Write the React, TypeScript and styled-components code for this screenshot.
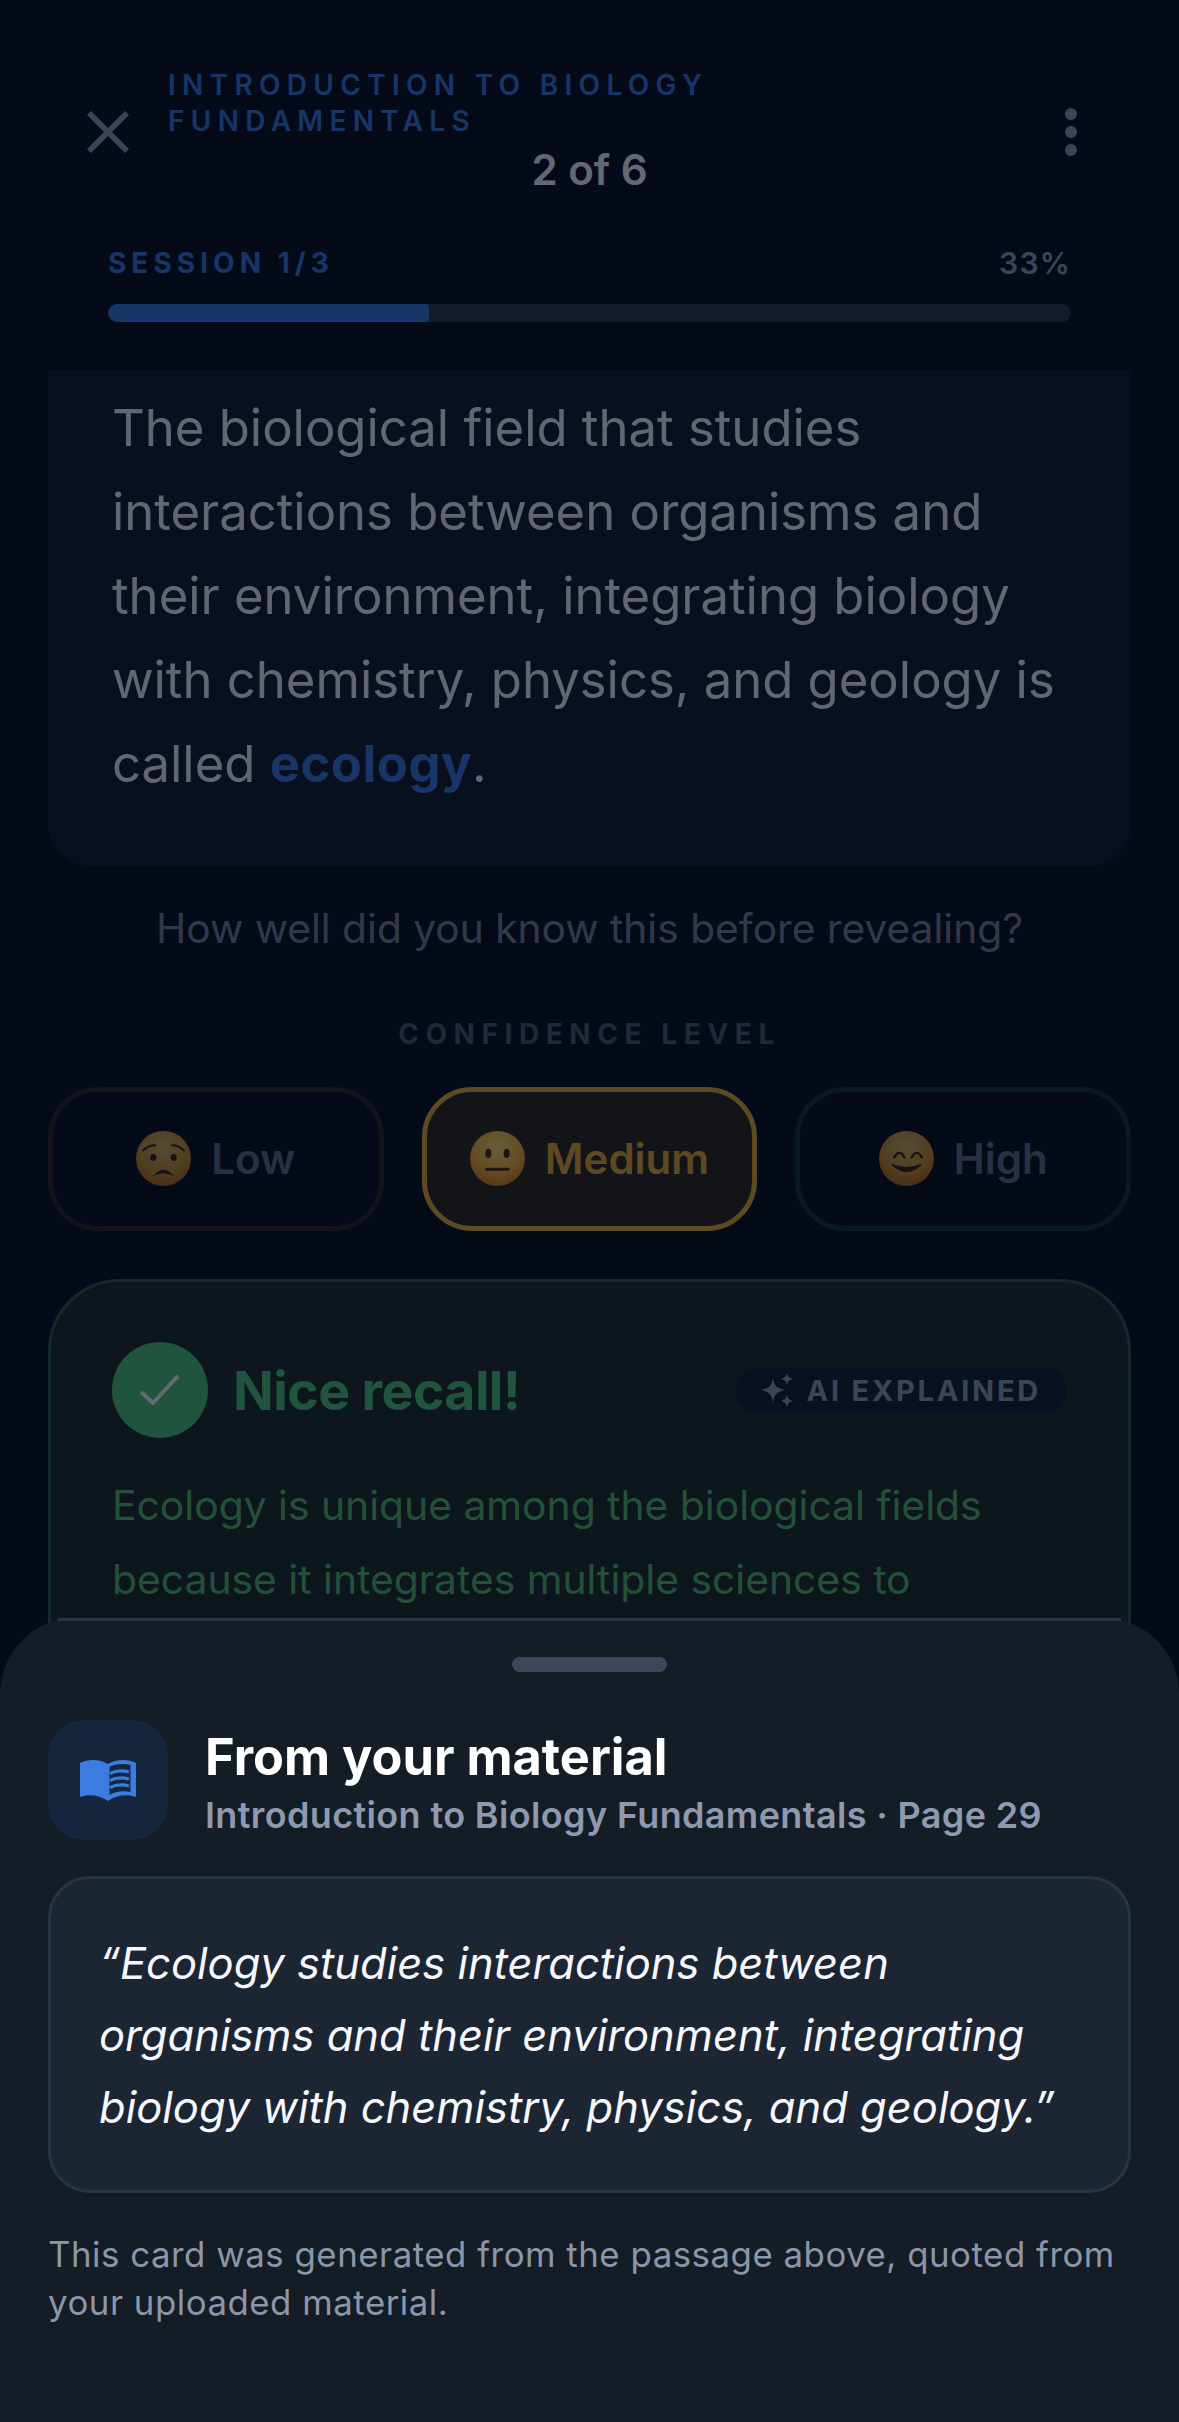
import styled, { createGlobalStyle } from "styled-components";

const Global = createGlobalStyle`
  html, body { margin: 0; padding: 0; background: #060a18; }
  * { box-sizing: border-box; }
`;

const Screen = styled.div`
  position: relative;
  width: 1179px;
  height: 2422px;
  overflow: hidden;
  background: #0c1019;
  font-family: Inter, "Noto Sans", sans-serif;
`;

const Header = styled.header`
  display: flex;
  align-items: center;
  justify-content: space-between;
  height: 197px;
  padding: 67px 87px 0;
`;

const IconBox = styled.div`
  flex: none;
  width: 42px;
  height: 48px;
  display: flex;
  align-items: center;
  justify-content: center;
`;

const HeaderMiddle = styled.div`
  flex: 1;
  min-width: 0;
  padding: 0 39px;
  align-self: flex-start;
`;

const DeckTitle = styled.div`
  font-size: 28px;
  line-height: 36px;
  font-weight: 600;
  letter-spacing: 0.225em;
  color: #3b7ae0;
  text-transform: uppercase;
`;

const Counter = styled.div`
  margin-top: 7px;
  font-size: 42px;
  line-height: 48px;
  font-weight: 600;
  text-align: center;
  color: #f8fafc;
`;

const Progress = styled.section`
  padding: 48px 108px 0;
`;

const ProgressRow = styled.div`
  display: flex;
  justify-content: space-between;
  align-items: center;
  height: 36px;
`;

const SessionLabel = styled.span`
  font-size: 28px;
  font-weight: 700;
  letter-spacing: 0.18em;
  color: #3b7ae0;
`;

const Percent = styled.span`
  font-size: 30px;
  font-weight: 600;
  letter-spacing: 0.04em;
  color: #94a3b8;
`;

const Track = styled.div`
  margin-top: 23px;
  height: 18px;
  border-radius: 9px;
  background: #2e3848;
  overflow: hidden;
`;

const Fill = styled.div`
  height: 100%;
  border-radius: 9px 3px 3px 9px;
  background: #3b7ae0;
`;

const Body = styled.main`
  margin-top: 48px;
  padding: 0 48px;
`;

const FactCard = styled.div`
  padding: 16px 64px 60px;
  border-radius: 0 0 42px 42px;
  background: #161c2a;
  font-size: 50.8px;
  line-height: 84px;
  color: #f1f5f9;
`;

const Term = styled.strong`
  font-weight: 700;
  letter-spacing: 0.01em;
  color: #3b7ae0;
`;

const Hint = styled.p`
  margin: 36px 0 0;
  font-size: 40.7px;
  line-height: 54px;
  text-align: center;
  color: #7c8296;
`;

const ConfidenceLabel = styled.div`
  margin-top: 60px;
  font-size: 28px;
  line-height: 36px;
  font-weight: 700;
  letter-spacing: 0.235em;
  text-align: center;
  color: #555b69;
`;

const ConfidenceRow = styled.div`
  display: grid;
  grid-template-columns: repeat(3, 1fr);
  gap: 38px;
  margin-top: 35px;
`;

const toneColors = {
  low: { border: "#342e20", bg: "transparent", text: "#7c87a6", opacity: 0.8 },
  medium: { border: "#e8b032", bg: "#2f2919", text: "#e8b032", opacity: 1 },
  high: { border: "#1c3c30", bg: "transparent", text: "#7c87a6", opacity: 0.8 },
};

type Tone = keyof typeof toneColors;

const ConfidenceButton = styled.div<{ $tone: Tone }>`
  display: flex;
  align-items: center;
  justify-content: center;
  gap: 20px;
  height: 144px;
  padding-bottom: 2px;
  border-radius: 50px;
  border: 5px solid ${(p) => toneColors[p.$tone].border};
  background: ${(p) => toneColors[p.$tone].bg};
  color: ${(p) => toneColors[p.$tone].text};
  opacity: ${(p) => toneColors[p.$tone].opacity};
  font-size: 42px;
  font-weight: 600;
`;

const ResultCard = styled.div`
  margin-top: 48px;
  padding: 60px 61px 0;
  height: 500px;
  border: 3px solid #345b46;
  border-radius: 72px;
  background: #1e2f26;
`;

const ResultHead = styled.div`
  display: flex;
  align-items: center;
  gap: 25px;
`;

const CheckCircle = styled.div`
  flex: none;
  width: 96px;
  height: 96px;
  border-radius: 50%;
  background: #50c878;
  display: flex;
  align-items: center;
  justify-content: center;
`;

const ResultTitle = styled.div`
  flex: 1;
  font-size: 53.5px;
  font-weight: 700;
  letter-spacing: -0.01em;
  color: #50c878;
`;

const AiBadge = styled.div`
  display: flex;
  align-items: center;
  gap: 12px;
  height: 47px;
  padding: 0 26px;
  border-radius: 24px;
  background: #16222e;
  color: #94a3b8;
  font-size: 29px;
  font-weight: 700;
  letter-spacing: 0.095em;
`;

const ResultText = styled.p`
  margin: 30px 0 0;
  font-size: 40.8px;
  line-height: 74px;
  color: #57bf6e;
`;

const Scrim = styled.div`
  position: absolute;
  inset: 0;
  background: rgba(2, 6, 23, 0.6);
`;

const Sheet = styled.aside`
  position: absolute;
  left: 0;
  right: 0;
  bottom: 0;
  height: 804px;
  padding: 39px 48px 0;
  border-radius: 76px 76px 0 0;
  background: #141c26;

  &::before {
    content: "";
    position: absolute;
    top: 0;
    left: 58px;
    right: 58px;
    height: 3px;
    background: #2a3648;
  }
`;

const Handle = styled.div`
  width: 155px;
  height: 15px;
  margin: 0 auto;
  border-radius: 8px;
  background: #3d4759;
`;

const SourceRow = styled.div`
  display: flex;
  align-items: center;
  gap: 37px;
  margin-top: 48px;
`;

const SourceTile = styled.div`
  flex: none;
  width: 120px;
  height: 120px;
  border-radius: 36px;
  background: #17263f;
  display: flex;
  align-items: center;
  justify-content: center;
`;

const SourceText = styled.div`
  padding-top: 4.5px;
`;

const SourceTitle = styled.div`
  font-size: 50.5px;
  line-height: 60px;
  font-weight: 700;
  color: #ffffff;
`;

const SourceMeta = styled.div`
  margin-top: 4.5px;
  font-size: 36px;
  line-height: 46px;
  font-weight: 600;
  letter-spacing: 0.01em;
  color: #8f9ab0;
`;

const QuoteBox = styled.blockquote`
  margin: 36px 0 0;
  height: 317px;
  padding: 48px 48px 0;
  border: 3px solid #283444;
  border-radius: 42px;
  background: #1c2633;
  font-size: 43.5px;
  line-height: 72px;
  font-style: italic;
  color: #f5f7fa;
`;

const Footnote = styled.p`
  margin: 37px 0 0;
  font-size: 34.8px;
  line-height: 48px;
  letter-spacing: 0.015em;
  color: #8d96a8;
`;

function FaceBase({ id }: { id: string }) {
  return (
    <>
      <defs>
        <radialGradient id={id} cx="50%" cy="30%" r="72%">
          <stop offset="0%" stopColor="#ffdf70" />
          <stop offset="65%" stopColor="#f8b030" />
          <stop offset="100%" stopColor="#dc7a1c" />
        </radialGradient>
      </defs>
      <circle cx="27" cy="27" r="27" fill={`url(#${id})`} />
    </>
  );
}

function Face({ tone }: { tone: Tone }) {
  const ink = "#4a2a10";
  return (
    <svg width="55" height="55" viewBox="0 0 54 54">
      <FaceBase id={`face-${tone}`} />
      {tone === "low" && (
        <>
          <path d="M7 19q5-5 12-5M47 19q-5-5-12-5" stroke={ink} strokeWidth="2" fill="none" strokeLinecap="round" />
          <ellipse cx="17" cy="26" rx="3" ry="3.500" fill={ink} />
          <ellipse cx="37" cy="26" rx="3" ry="3.500" fill={ink} />
          <path d="M17 44q10-12 20 0q-10-5-20 0z" fill={ink} />
        </>
      )}
      {tone === "medium" && (
        <>
          <ellipse cx="18" cy="22" rx="3" ry="4.500" fill={ink} />
          <ellipse cx="36" cy="22" rx="3" ry="4.500" fill={ink} />
          <rect x="15" y="36" width="24" height="3" rx="1.500" fill={ink} />
        </>
      )}
      {tone === "high" && (
        <>
          <path d="M15 26q5-9 10 0M32 26q5-9 10 0" stroke={ink} strokeWidth="2.400" fill="none" strokeLinecap="round" />
          <path d="M13 33q14 13 28 0q-14 6-28 0z" fill={ink} stroke={ink} strokeWidth="1.500" strokeLinejoin="round" />
        </>
      )}
    </svg>
  );
}

function BookIcon() {
  return (
    <svg width="56" height="42" viewBox="0 0 56 42">
      <path
        d="M0 4C8 0 20 0 28 5C36 0 48 0 56 4V38C48 35 36 36 28 42C20 36 8 35 0 38Z"
        fill="#3b7ce0"
      />
      <path d="M29.500 8C34 5 44 4 50.500 6V33C44 31.500 35 32 29.500 36Z" fill="#17263f" />
      <g stroke="#3b7ce0" strokeWidth="3.200" fill="none">
        <path d="M30 14.500C35 12 43 11.500 49 13" />
        <path d="M30 21.500C35 19 43 18.500 49 20" />
        <path d="M30 28.500C35 26 43 25.500 49 27" />
      </g>
    </svg>
  );
}

export default function App() {
  return (
    <>
      <Global />
      <Screen>
        <Header>
          <IconBox>
            <svg width="42" height="42" viewBox="0 0 42 42">
              <path d="M2 2L40 40M40 2L2 40" stroke="#94a3b8" strokeWidth="5.500" />
            </svg>
          </IconBox>
          <HeaderMiddle>
            <DeckTitle>
              Introduction to Biology
              <br />
              Fundamentals
            </DeckTitle>
            <Counter>2 of 6</Counter>
          </HeaderMiddle>
          <IconBox>
            <svg width="12" height="48" viewBox="0 0 12 48">
              <circle cx="6" cy="6" r="6" fill="#94a3b8" />
              <circle cx="6" cy="24" r="6" fill="#94a3b8" />
              <circle cx="6" cy="42" r="6" fill="#94a3b8" />
            </svg>
          </IconBox>
        </Header>
        <Progress>
          <ProgressRow>
            <SessionLabel>SESSION 1/3</SessionLabel>
            <Percent>33%</Percent>
          </ProgressRow>
          <Track>
            <Fill style={{ width: "33.3%" }} />
          </Track>
        </Progress>
        <Body>
          <FactCard>
            The biological field that studies interactions between organisms and their environment,
            integrating biology with chemistry, physics, and geology is called <Term>ecology</Term>.
          </FactCard>
          <Hint>How well did you know this before revealing?</Hint>
          <ConfidenceLabel>CONFIDENCE LEVEL</ConfidenceLabel>
          <ConfidenceRow>
            <ConfidenceButton $tone="low">
              <Face tone="low" />
              Low
            </ConfidenceButton>
            <ConfidenceButton $tone="medium">
              <Face tone="medium" />
              Medium
            </ConfidenceButton>
            <ConfidenceButton $tone="high">
              <Face tone="high" />
              High
            </ConfidenceButton>
          </ConfidenceRow>
          <ResultCard>
            <ResultHead>
              <CheckCircle>
                <svg width="40" height="30" viewBox="0 0 40 30">
                  <path d="M1 17L13 28L38 1" stroke="#f8fafc" strokeWidth="4" fill="none" />
                </svg>
              </CheckCircle>
              <ResultTitle>Nice recall!</ResultTitle>
              <AiBadge>
                <svg width="34" height="34" viewBox="0 0 34 34" fill="#94a3b8">
                  <path d="M12 5C13 12 15 15 24 17C15 19 13 22 12 30C11 22 9 19 0 17C9 15 11 12 12 5Z" />
                  <path d="M26 0C26.500 3 28 5 32 6C28 7 26.500 9 26 12C25.500 9 24 7 20 6C24 5 25.500 3 26 0Z" />
                  <path d="M26 22C26.500 25 28 27 32 28C28 29 26.500 31 26 34C25.500 31 24 29 20 28C24 27 25.500 25 26 22Z" />
                </svg>
                AI EXPLAINED
              </AiBadge>
            </ResultHead>
            <ResultText>
              Ecology is unique among the biological fields because it integrates multiple sciences to
              understand how living things depend on one another.
            </ResultText>
          </ResultCard>
        </Body>
        <Scrim />
        <Sheet>
          <Handle />
          <SourceRow>
            <SourceTile>
              <BookIcon />
            </SourceTile>
            <SourceText>
              <SourceTitle>From your material</SourceTitle>
              <SourceMeta>Introduction to Biology Fundamentals · Page 29</SourceMeta>
            </SourceText>
          </SourceRow>
          <QuoteBox>
            “Ecology studies interactions between organisms and their environment, integrating biology
            with chemistry, physics, and geology.”
          </QuoteBox>
          <Footnote>
            This card was generated from the passage above, quoted from your uploaded material.
          </Footnote>
        </Sheet>
      </Screen>
    </>
  );
}
